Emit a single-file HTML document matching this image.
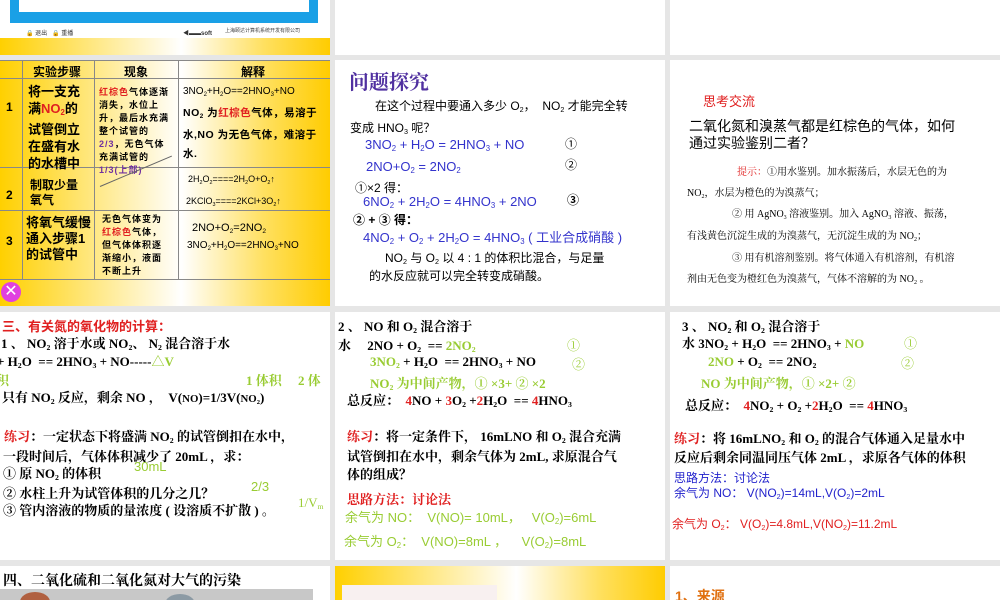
<!DOCTYPE html>
<html><head><meta charset="utf-8"><style>
*{margin:0;padding:0;box-sizing:border-box}
body{width:1000px;height:600px;background:#e6e6e6;position:relative;overflow:hidden;font-family:"Liberation Sans","Noto Sans CJK SC",sans-serif}
.p{position:absolute;background:#fff;overflow:hidden}
.a{position:absolute;white-space:nowrap}
.s{font-family:"Liberation Serif","Noto Serif CJK SC",serif}
sub{font-size:60%;vertical-align:-2px}
.g{color:#99cc33}.r{color:#e02020}.b{color:#3333cc}
.yel{background:linear-gradient(90deg,#ffd000 0%,#fff6d0 45%,#fff 55%,#ffe060 80%,#ffcc00 100%)}
</style></head><body>
<!-- row0 -->
<div class="p" style="left:0;top:0;width:330px;height:55px">
 <div class="a" style="left:10px;top:0;width:308px;height:23px;background:#1aa0e6"></div>
 <div class="a" style="left:19px;top:0;width:290px;height:12px;background:#fff"></div>
 <div class="a" style="left:26px;top:28px;font-size:6px;color:#333">🔒 退出 &nbsp; 🔒 重播</div>
 <div class="a" style="left:183px;top:28px;font-size:6px;color:#333;font-weight:bold">◀▬▬soft</div>
 <div class="a" style="left:225px;top:27px;font-size:5px;color:#444">上海颐达计算机系统开发有限公司</div>
 <div class="a yel" style="left:0;top:38px;width:330px;height:17px"></div>
</div>
<div class="p" style="left:335px;top:0;width:330px;height:55px"></div>
<div class="p" style="left:670px;top:0;width:330px;height:55px"></div>
<!-- row1 left table -->
<div class="p yel" style="left:0;top:60px;width:330px;height:246px;font-size:12px">
 <div class="a" style="left:0;top:0;width:330px;height:0;border-top:1px solid #888"></div>
 <div class="a" style="left:22px;top:0;height:219px;border-left:1px solid #888"></div>
 <div class="a" style="left:94px;top:0;height:219px;border-left:1px solid #888"></div>
 <div class="a" style="left:178px;top:0;height:219px;border-left:1px solid #888"></div>
 <div class="a" style="left:0;top:18px;width:330px;border-top:1px solid #888"></div>
 <div class="a" style="left:0;top:107px;width:330px;border-top:1px solid #888"></div>
 <div class="a" style="left:0;top:150px;width:330px;border-top:1px solid #888"></div>
 <div class="a" style="left:0;top:219px;width:330px;border-top:1px solid #888"></div>
 <div class="a" style="left:33px;top:3px;font-weight:bold">实验步骤</div>
 <div class="a" style="left:124px;top:3px;font-weight:bold">现象</div>
 <div class="a" style="left:241px;top:3px;font-weight:bold">解释</div>
 <div class="a" style="left:6px;top:40px;font-weight:bold">1</div>
 <div class="a" style="left:28px;top:23px;font-size:13px;font-weight:bold;line-height:17px;white-space:normal;width:56px">将一支充满<span class="r">NO<sub>2</sub></span>的试管倒立在盛有水的水槽中</div>
 <div class="a" style="left:99px;top:26px;font-size:9px;font-weight:bold;line-height:13px;white-space:normal;width:74px;letter-spacing:1px"><span class="r">红棕色</span>气体逐渐消失，水位上升，最后水充满整个试管的<span style="color:#7030a0">2/3</span>，无色气体充满试管的<span style="color:#7030a0">1/3(上部)</span></div>
 <div class="a" style="left:183px;top:26px;font-size:10px">3NO<sub>2</sub>+H<sub>2</sub>O==2HNO<sub>3</sub>+NO</div>
 <div class="a" style="left:183px;top:44px;font-size:10.5px;font-weight:bold;line-height:19px;white-space:normal;width:146px;letter-spacing:0.5px">NO<sub>2</sub> 为<span class="r">红棕色</span>气体，易溶于水,NO 为无色气体，难溶于水.</div>
 <div class="a" style="left:30px;top:116px;font-weight:bold">制取少量</div>
 <div class="a" style="left:6px;top:128px;font-weight:bold">2</div>
 <div class="a" style="left:30px;top:131px;font-weight:bold">氧气</div>
 <div class="a" style="left:100px;top:126px;width:78px;border-top:1px solid #666;transform:rotate(-23deg);transform-origin:left"></div>
 <div class="a" style="left:188px;top:114px;font-size:9px">2H<sub>2</sub>O<sub>2</sub>====2H<sub>2</sub>O+O<sub>2</sub>↑</div>
 <div class="a" style="left:186px;top:136px;font-size:9px">2KClO<sub>3</sub>====2KCl+3O<sub>2</sub>↑</div>
 <div class="a" style="left:6px;top:174px;font-weight:bold">3</div>
 <div class="a" style="left:26px;top:155px;font-size:13px;font-weight:bold;line-height:16px;white-space:normal;width:66px">将氧气缓慢通入步骤1的试管中</div>
 <div class="a" style="left:102px;top:153px;font-size:9px;font-weight:bold;line-height:13px;white-space:normal;width:66px;letter-spacing:1px">无色气体变为<span class="r">红棕色</span>气体，但气体体积逐渐缩小，液面不断上升</div>
 <div class="a" style="left:192px;top:162px;font-size:11px">2NO+O<sub>2</sub>=2NO<sub>2</sub></div>
 <div class="a" style="left:187px;top:180px;font-size:10px">3NO<sub>2</sub>+H<sub>2</sub>O==2HNO<sub>3</sub>+NO</div>
 <div class="a" style="left:1px;top:222px;width:20px;height:20px;border-radius:50%;background:#e040e0;color:#fff;font-size:16px;line-height:20px;text-align:center">✕</div>
</div>
<!-- row1 mid -->
<div class="p" style="left:335px;top:60px;width:330px;height:246px;font-size:12px">
 <div class="a" style="left:14px;top:6px;font-size:20px;font-weight:bold;color:#5030a0;font-family:'Noto Serif CJK SC',serif">问题探究</div>
 <div class="a" style="left:40px;top:37px">在这个过程中要通入多少 O<sub>2</sub>，&nbsp; NO<sub>2</sub> 才能完全转</div>
 <div class="a" style="left:15px;top:59px">变成 HNO<sub>3</sub> 呢？</div>
 <div class="a b" style="left:30px;top:77px;font-size:13px">3NO<sub>2</sub> + H<sub>2</sub>O = 2HNO<sub>3</sub> + NO</div>
 <div class="a" style="left:230px;top:75px">①</div>
 <div class="a b" style="left:31px;top:99px;font-size:13px">2NO+O<sub>2</sub> = 2NO<sub>2</sub></div>
 <div class="a" style="left:230px;top:96px">②</div>
 <div class="a" style="left:20px;top:119px">①×2 得：</div>
 <div class="a b" style="left:28px;top:134px;font-size:13px">6NO<sub>2</sub> + 2H<sub>2</sub>O = 4HNO<sub>3</sub> + 2NO</div>
 <div class="a" style="left:232px;top:131px;font-weight:bold">③</div>
 <div class="a" style="left:18px;top:151px;font-weight:bold">② + ③ 得：</div>
 <div class="a b" style="left:28px;top:167px;font-size:13px">4NO<sub>2</sub> + O<sub>2</sub> + 2H<sub>2</sub>O = 4HNO<sub>3</sub> ( 工业合成硝酸 )</div>
 <div class="a" style="left:50px;top:189px">NO<sub>2</sub> 与 O<sub>2</sub> 以 4 : 1 的体积比混合，与足量</div>
 <div class="a" style="left:34px;top:207px">的水反应就可以完全转变成硝酸。</div>
</div>
<!-- row1 right -->
<div class="p" style="left:670px;top:60px;width:330px;height:246px">
 <div class="a r" style="left:33px;top:31px;font-size:13px">思考交流</div>
 <div class="a" style="left:19px;top:58px;font-size:14px;line-height:17px">二氧化氮和溴蒸气都是红棕色的气体，如何<br>通过实验鉴别二者？</div>
 <div class="a s" style="left:67px;top:103px;font-size:10px"><span class="r">提示：</span>①用水鉴别。加水振荡后，水层无色的为</div>
 <div class="a s" style="left:17px;top:124px;font-size:10px">NO<sub>2</sub>，水层为橙色的为溴蒸气；</div>
 <div class="a s" style="left:62px;top:145px;font-size:10px">② 用 AgNO<sub>3</sub> 溶液鉴别。加入 AgNO<sub>3</sub> 溶液、振荡，</div>
 <div class="a s" style="left:17px;top:167px;font-size:10px">有浅黄色沉淀生成的为溴蒸气，无沉淀生成的为 NO<sub>2</sub>；</div>
 <div class="a s" style="left:62px;top:189px;font-size:10px">③ 用有机溶剂鉴别。将气体通入有机溶剂，有机溶</div>
 <div class="a s" style="left:17px;top:210px;font-size:10px">剂由无色变为橙红色为溴蒸气，气体不溶解的为 NO<sub>2</sub> 。</div>
</div>
<!-- row2 left -->
<div class="p s" style="left:0;top:312px;width:330px;height:248px;font-size:13px;font-weight:bold">
 <div class="a r" style="left:2px;top:4px;font-family:'Noto Sans CJK SC',sans-serif">三、有关氮的氧化物的计算：</div>
 <div class="a" style="left:1px;top:21px">1 、 NO<sub>2</sub> 溶于水或 NO<sub>2</sub>、 N<sub>2</sub> 混合溶于水</div>
 <div class="a" style="left:-3px;top:39px">+ H<sub>2</sub>O &nbsp;== 2HNO<sub>3</sub> + NO-----<span class="g">△V</span></div>
 <div class="a g" style="left:-4px;top:58px">积</div>
 <div class="a g" style="left:246px;top:58px">1 体积 &nbsp; &nbsp; 2 体</div>
 <div class="a" style="left:2px;top:75px">只有 NO<sub>2</sub> 反应，剩余 NO ， &nbsp;V(<small>NO</small>)=1/3V(<small>NO<sub>2</sub></small>)</div>
 <div class="a" style="left:4px;top:114px"><span class="r">练习</span>：一定状态下将盛满 NO<sub>2</sub> 的试管倒扣在水中，</div>
 <div class="a" style="left:3px;top:134px">一段时间后，气体体积减少了 20mL ，求：</div>
 <div class="a" style="left:3px;top:151px">① 原 NO<sub>2</sub> 的体积</div>
 <div class="a g" style="left:134px;top:147px;font-family:'Liberation Sans';font-weight:normal">30mL</div>
 <div class="a" style="left:3px;top:171px">② 水柱上升为试管体积的几分之几？</div>
 <div class="a g" style="left:251px;top:167px;font-family:'Liberation Sans';font-weight:normal">2/3</div>
 <div class="a" style="left:3px;top:188px">③ 管内溶液的物质的量浓度 ( 设溶质不扩散 ) 。</div>
 <div class="a g" style="left:298px;top:183px;font-weight:normal">1/V<sub>m</sub></div>
</div>
<!-- row2 mid -->
<div class="p s" style="left:335px;top:312px;width:330px;height:248px;font-size:13px;font-weight:bold">
 <div class="a" style="left:3px;top:4px">2 、 NO 和 O<sub>2</sub> 混合溶于</div>
 <div class="a" style="left:3px;top:23px">水 &nbsp; &nbsp; 2NO + O<sub>2</sub> &nbsp;== <span class="g">2NO<sub>2</sub></span></div>
 <div class="a g" style="left:232px;top:23px;font-weight:normal">①</div>
 <div class="a" style="left:35px;top:42px"><span class="g">3NO<sub>2</sub></span> + H<sub>2</sub>O &nbsp;== 2HNO<sub>3</sub> + NO</div>
 <div class="a g" style="left:237px;top:42px;font-weight:normal">②</div>
 <div class="a g" style="left:35px;top:61px">NO<sub>2</sub> 为中间产物，① ×3+ ② ×2</div>
 <div class="a" style="left:12px;top:78px">总反应： &nbsp;<span class="r">4</span>NO + <span class="r">3</span>O<sub>2</sub> +<span class="r">2</span>H<sub>2</sub>O &nbsp;== <span class="r">4</span>HNO<sub>3</sub></div>
 <div class="a" style="left:12px;top:114px"><span class="r">练习</span>：将一定条件下， 16mLNO 和 O<sub>2</sub> 混合充满</div>
 <div class="a" style="left:12px;top:134px">试管倒扣在水中，剩余气体为 2mL, 求原混合气</div>
 <div class="a" style="left:12px;top:152px">体的组成？</div>
 <div class="a r" style="left:12px;top:177px">思路方法：讨论法</div>
 <div class="a g" style="left:10px;top:195px;font-family:'Liberation Sans','Noto Sans CJK SC';font-weight:normal">余气为 NO： &nbsp;V(NO)= 10mL， &nbsp; V(O<sub>2</sub>)=6mL</div>
 <div class="a g" style="left:9px;top:219px;font-family:'Liberation Sans','Noto Sans CJK SC';font-weight:normal">余气为 O<sub>2</sub>： &nbsp;V(NO)=8mL ， &nbsp; &nbsp;V(O<sub>2</sub>)=8mL</div>
</div>
<!-- row2 right -->
<div class="p s" style="left:670px;top:312px;width:330px;height:248px;font-size:13px;font-weight:bold">
 <div class="a" style="left:12px;top:4px">3 、 NO<sub>2</sub> 和 O<sub>2</sub> 混合溶于</div>
 <div class="a" style="left:12px;top:21px">水 3NO<sub>2</sub> + H<sub>2</sub>O &nbsp;== 2HNO<sub>3</sub> + <span class="g">NO</span></div>
 <div class="a g" style="left:234px;top:21px;font-weight:normal">①</div>
 <div class="a" style="left:38px;top:42px"><span class="g">2NO</span> + O<sub>2</sub> &nbsp;== 2NO<sub>2</sub></div>
 <div class="a g" style="left:231px;top:41px;font-weight:normal">②</div>
 <div class="a g" style="left:31px;top:61px">NO 为中间产物，① ×2+ ②</div>
 <div class="a" style="left:15px;top:83px">总反应： &nbsp;<span class="r">4</span>NO<sub>2</sub> + O<sub>2</sub> +<span class="r">2</span>H<sub>2</sub>O &nbsp;== <span class="r">4</span>HNO<sub>3</sub></div>
 <div class="a" style="left:4px;top:116px"><span class="r">练习</span>：将 16mLNO<sub>2</sub> 和 O<sub>2</sub> 的混合气体通入足量水中</div>
 <div class="a" style="left:4px;top:135px">反应后剩余同温同压气体 2mL ，求原各气体的体积</div>
 <div class="a" style="left:4px;top:157px;font-size:12px;color:#2222cc;font-family:'Liberation Sans','Noto Sans CJK SC';font-weight:normal">思路方法：讨论法</div>
 <div class="a" style="left:4px;top:172px;font-size:12px;color:#2222cc;font-family:'Liberation Sans','Noto Sans CJK SC';font-weight:normal">余气为 NO： V(NO<sub>2</sub>)=14mL,V(O<sub>2</sub>)=2mL</div>
 <div class="a r" style="left:2px;top:203px;font-size:12px;font-family:'Liberation Sans','Noto Sans CJK SC';font-weight:normal">余气为 O<sub>2</sub>： V(O<sub>2</sub>)=4.8mL,V(NO<sub>2</sub>)=11.2mL</div>
</div>
<!-- row3 -->
<div class="p" style="left:0;top:566px;width:330px;height:34px">
 <div class="a" style="left:3px;top:4px;font-size:14px;font-weight:bold;font-family:'Noto Serif CJK SC',serif">四、二氧化硫和二氧化氮对大气的污染</div>
 <div class="a" style="left:0;top:23px;width:313px;height:11px;background:#c8c8c8"></div>
 <div class="a" style="left:20px;top:26px;width:30px;height:20px;border-radius:50%;background:#b06040"></div>
 <div class="a" style="left:165px;top:28px;width:30px;height:20px;border-radius:50%;background:#8c9aa4"></div>
</div>
<div class="p yel" style="left:335px;top:566px;width:330px;height:34px">
 <div class="a" style="left:7px;top:19px;width:155px;height:20px;background:#f8f0f0"></div>
</div>
<div class="p" style="left:670px;top:566px;width:330px;height:34px">
 <div class="a" style="left:5px;top:20px;font-size:14px;font-weight:bold;color:#e07010">1、来源</div>
</div>
</body></html>
